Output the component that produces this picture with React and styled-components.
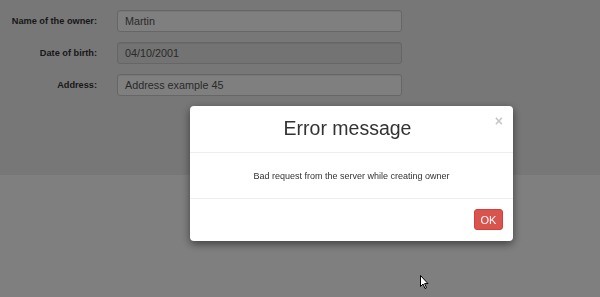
import React from "react";
import styled, { createGlobalStyle } from "styled-components";

const Global = createGlobalStyle`
  html, body { margin: 0; padding: 0; background: #fff; }
  body { font-family: "Liberation Sans", Arial, sans-serif; width: 600px; height: 297px; overflow: hidden; }
`;

const Page = styled.div`
  width: 600px;
  height: 297px;
  background: #fff;
`;

const TopSection = styled.section`
  height: 175px;
  background: #eeeeee;
  box-sizing: border-box;
  padding-top: 10px;
`;

const Form = styled.form`
  display: flex;
  flex-direction: column;
  gap: 10px;
`;

const Row = styled.div`
  display: flex;
  align-items: center;
  height: 22px;
`;

const Label = styled.label`
  box-sizing: border-box;
  flex: 0 0 117px;
  width: 117px;
  text-align: right;
  white-space: nowrap;
  font-size: 9.2px;
  font-weight: bold;
  color: #333;
  padding-right: 20px;
`;

const Input = styled.div`
  box-sizing: border-box;
  width: 285px;
  height: 22px;
  border: 1px solid #ccc;
  border-radius: 3px;
  background: ${(p) => (p.$readonly ? "#e6e6e6" : "#fff")};
  box-shadow: inset 0 1px 1px rgba(0, 0, 0, 0.075);
  font-size: 10.8px;
  color: #555;
  padding: 0 7px;
  line-height: 20px;
`;

const Backdrop = styled.div`
  position: fixed;
  inset: 0;
  background: rgba(0, 0, 0, 0.5);
`;

const Modal = styled.div`
  position: fixed;
  left: 190px;
  top: 106px;
  width: 323px;
  height: 135px;
  background: #fff;
  border-radius: 4px;
  box-shadow: 0 3px 9px rgba(0, 0, 0, 0.5);
  display: flex;
  flex-direction: column;
`;

const Header = styled.div`
  position: relative;
  height: 47px;
  box-sizing: border-box;
  padding-right: 8px;
  border-bottom: 1px solid #eee;
  display: flex;
  align-items: center;
  justify-content: center;
`;

const Title = styled.h4`
  margin: 0;
  font-size: 19.5px;
  font-weight: normal;
  color: #333;
  line-height: 1;
`;

const Close = styled.span`
  position: absolute;
  right: 10px;
  top: 7px;
  font-size: 14px;
  font-weight: bold;
  color: #c8c8c8;
`;

const Body = styled.div`
  height: 45px;
  display: flex;
  align-items: center;
  justify-content: center;
  font-size: 9px;
  color: #333;
  border-bottom: 1px solid #eee;
`;

const Footer = styled.div`
  flex: 1;
  display: flex;
  justify-content: flex-end;
  align-items: flex-start;
  padding: 10px 10px 0 0;
`;

const Button = styled.button`
  width: 29px;
  height: 21px;
  border: 1px solid #d43f3a;
  background: #d9534f;
  color: #fff;
  border-radius: 3px;
  font-family: "Liberation Sans", Arial, sans-serif;
  font-size: 11px;
  padding: 0;
`;

const Cursor = styled.svg`
  position: fixed;
  left: 420px;
  top: 275px;
`;

export default function App() {
  return (
    <>
      <Global />
      <Page>
        <TopSection>
          <Form>
            <Row>
              <Label>Name of the owner:</Label>
              <Input>Martin</Input>
            </Row>
            <Row>
              <Label>Date of birth:</Label>
              <Input $readonly>04/10/2001</Input>
            </Row>
            <Row>
              <Label>Address:</Label>
              <Input>Address example 45</Input>
            </Row>
          </Form>
        </TopSection>
      </Page>
      <Backdrop />
      <Modal>
        <Header>
          <Title>Error message</Title>
          <Close>×</Close>
        </Header>
        <Body>Bad request from the server while creating owner</Body>
        <Footer>
          <Button>OK</Button>
        </Footer>
      </Modal>
      <Cursor width="10" height="15" viewBox="0 0 10 15">
        <path d="M0.5 0.5 L0.5 11.5 L3 9 L5 13.5 L6.5 12.8 L4.6 8.6 L8 8.6 Z" fill="#fff" stroke="#000" strokeWidth="1" />
      </Cursor>
    </>
  );
}
